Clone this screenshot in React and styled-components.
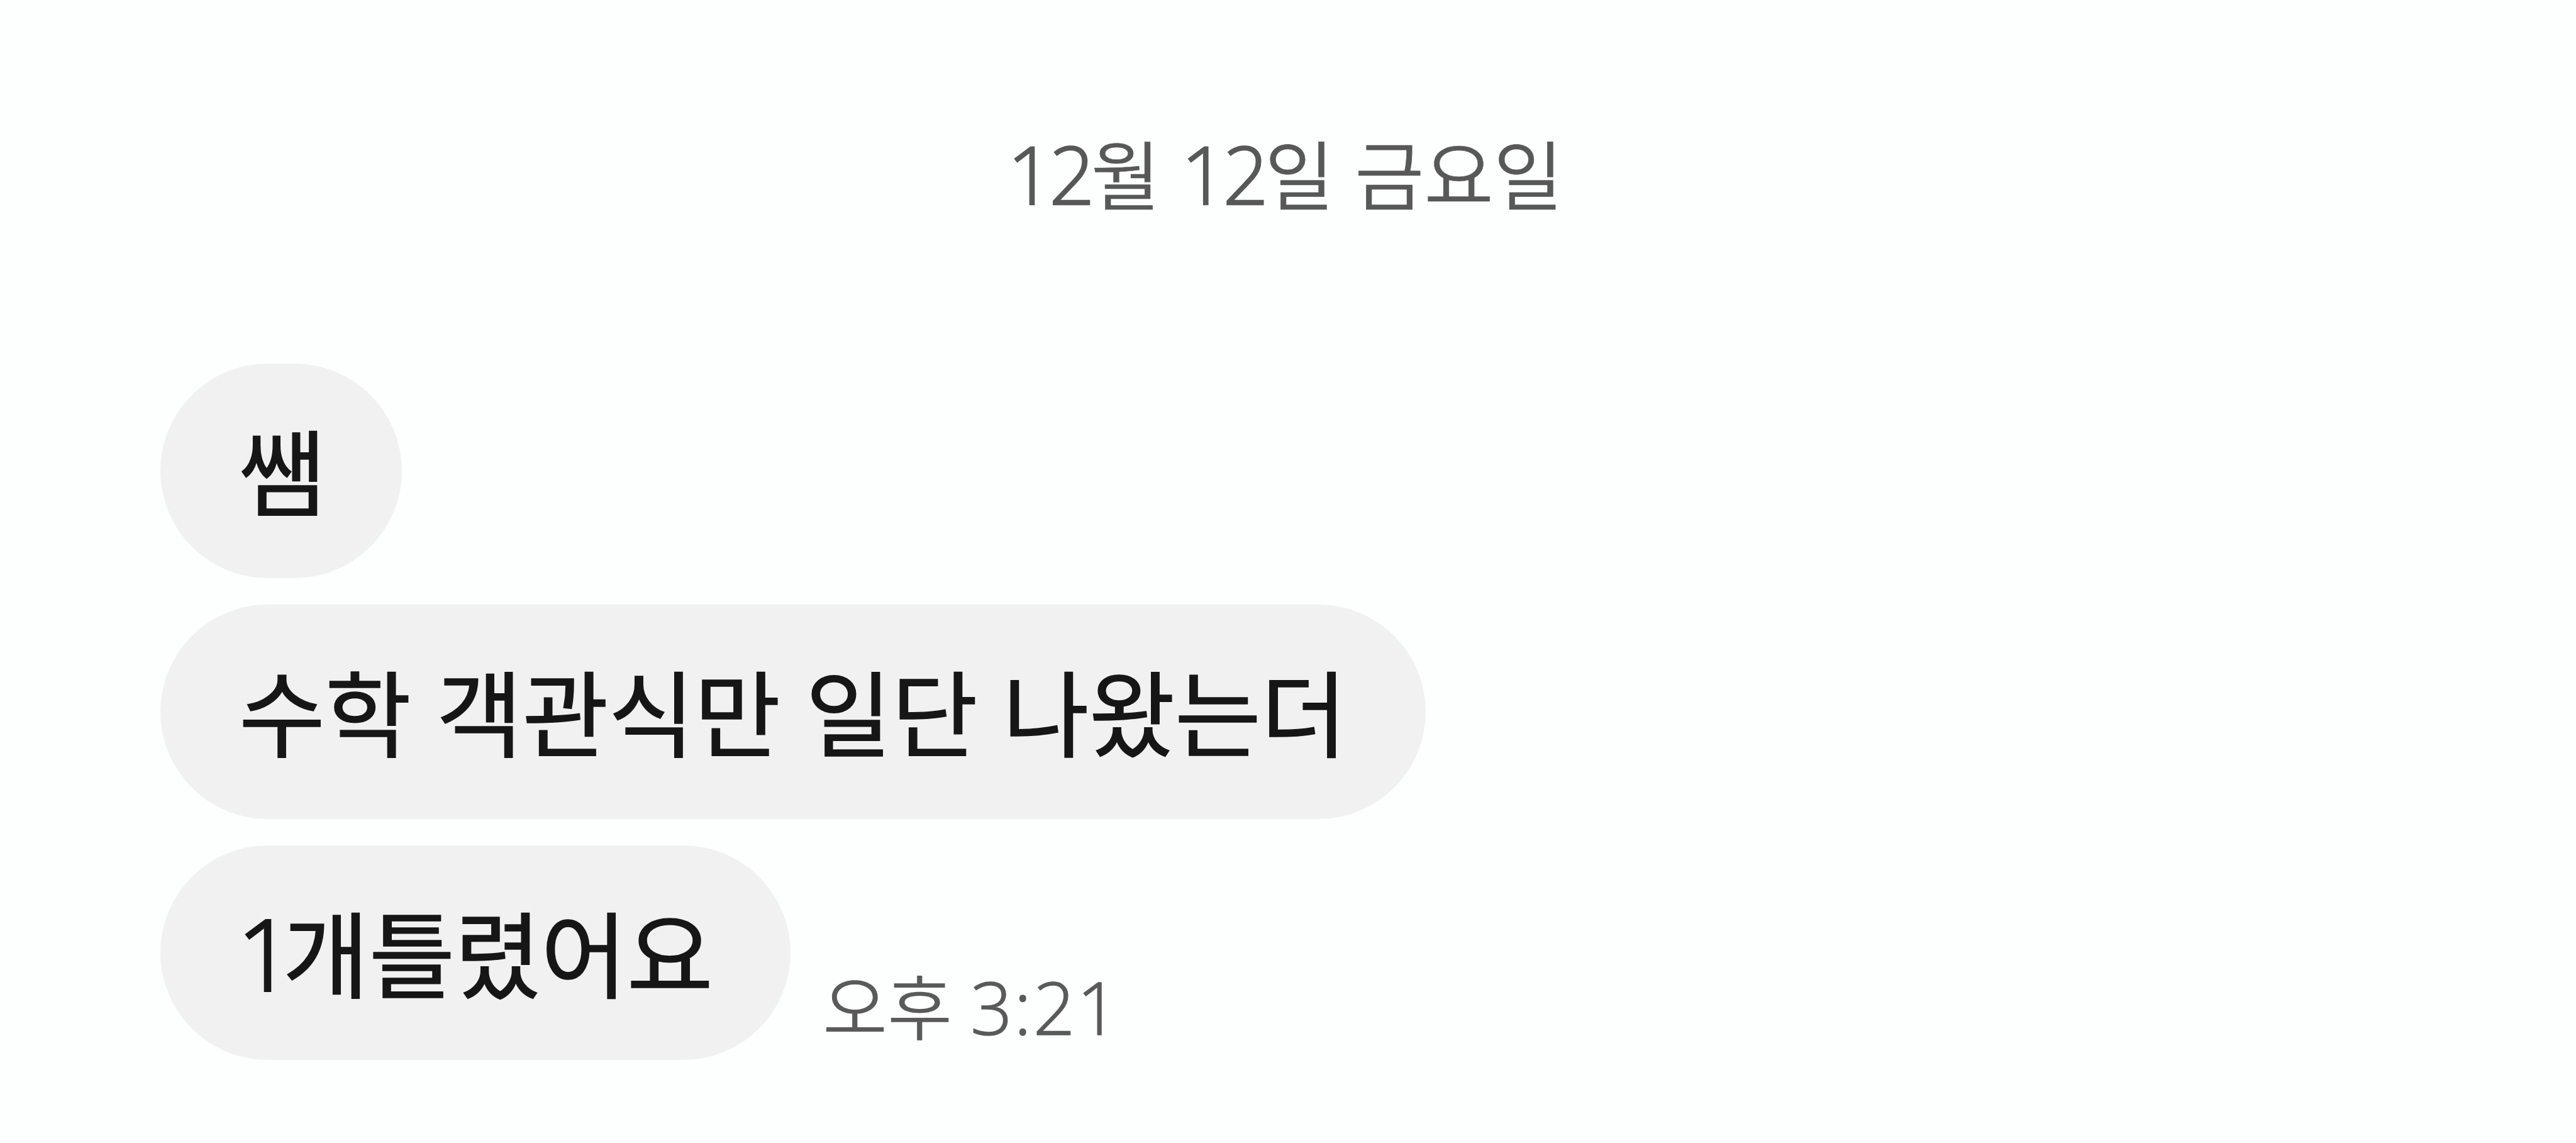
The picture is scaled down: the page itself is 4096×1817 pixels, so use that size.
import React from "react";
import styled, { createGlobalStyle, css } from "styled-components";

const GlobalStyle = createGlobalStyle`
  * {
    box-sizing: border-box;
  }

  body {
    margin: 0;
    background-color: #fdfefe;
    overflow: hidden;
  }
`;

const NotoSansRegular = css`
  font-family: "Noto Sans CJK KR", "Noto Sans", sans-serif;
  font-weight: 400;
  font-style: normal;
  white-space: nowrap;
`;

const messages = [
  { id: 1, text: "쌤", width: 384 },
  { id: 2, text: "수학 객관식만 일단 나왔는더", width: 2012 },
  { id: 3, number: "1", text: "개틀렸어요", width: 1002, time: "3:21" },
];

class MessageRow extends React.Component {
  render() {
    const { number, text, width, time } = this.props;

    return (
      <Row>
        <Bubble $width={width}>
          <BubbleText>
            {number && <BubbleNumber>{number}</BubbleNumber>}
            {text}
          </BubbleText>
        </Bubble>
        {time && (
          <Time>
            오후 <TimeNumber>{time}</TimeNumber>
          </Time>
        )}
      </Row>
    );
  }
}

function App() {
  return (
    <>
      <GlobalStyle />
      <Chat>
        <DateLabel>
          <DateNumber>12</DateNumber>월 <DateNumber>12</DateNumber>일 금요일
        </DateLabel>
        <MessageList>
          {messages.map((message) => (
            <MessageRow key={message.id} {...message} />
          ))}
        </MessageList>
      </Chat>
    </>
  );
}

const Chat = styled.main`
  width: 4096px;
  height: 1817px;
  display: flex;
  flex-direction: column;
  background-color: #fdfefe;
`;

const DateLabel = styled.div`
  ${NotoSansRegular}
  height: 160px;
  margin-top: 193px;
  padding-right: 9px;
  color: #585858;
  font-size: 120px;
  font-weight: 350;
  line-height: 160px;
  text-align: center;
  word-spacing: 6px;
  -webkit-text-stroke: 0.5px currentColor;
`;

const Numerals = styled.span`
  font-family: "Open Sans", sans-serif;
  font-weight: 300;
  line-height: 1;
`;

const DateNumber = styled(Numerals)`
  font-size: 127px;
  letter-spacing: -6px;
  -webkit-text-stroke: 2.5px currentColor;
`;

const MessageList = styled.div`
  margin-top: 225px;
  padding-left: 255px;
  display: flex;
  flex-direction: column;
  gap: 42px;
`;

const Row = styled.div`
  display: flex;
  align-items: flex-end;
  gap: 51px;
`;

const Bubble = styled.div`
  width: ${({ $width }) => $width}px;
  height: 341px;
  padding: 0 0 9px 125px;
  display: flex;
  align-items: center;
  background-color: #f1f1f1;
  border-radius: 171px;
`;

const BubbleText = styled.span`
  ${NotoSansRegular}
  color: #161616;
  font-size: 149px;
  line-height: 200px;
  letter-spacing: -0.3px;
  word-spacing: 7px;
  -webkit-text-stroke: 1.5px currentColor;
`;

const BubbleNumber = styled(Numerals)`
  margin-left: -3px;
  font-size: 157px;
  letter-spacing: -17px;
  -webkit-text-stroke: 4px currentColor;
`;

const Time = styled.span`
  ${NotoSansRegular}
  margin-bottom: 19px;
  color: #5a5a5a;
  font-size: 112px;
  font-weight: 350;
  line-height: 140px;
  word-spacing: 4px;
`;

const TimeNumber = styled(Numerals)`
  font-size: 117px;
  letter-spacing: 2.5px;
  -webkit-text-stroke: 1.5px currentColor;
`;

export default App;
